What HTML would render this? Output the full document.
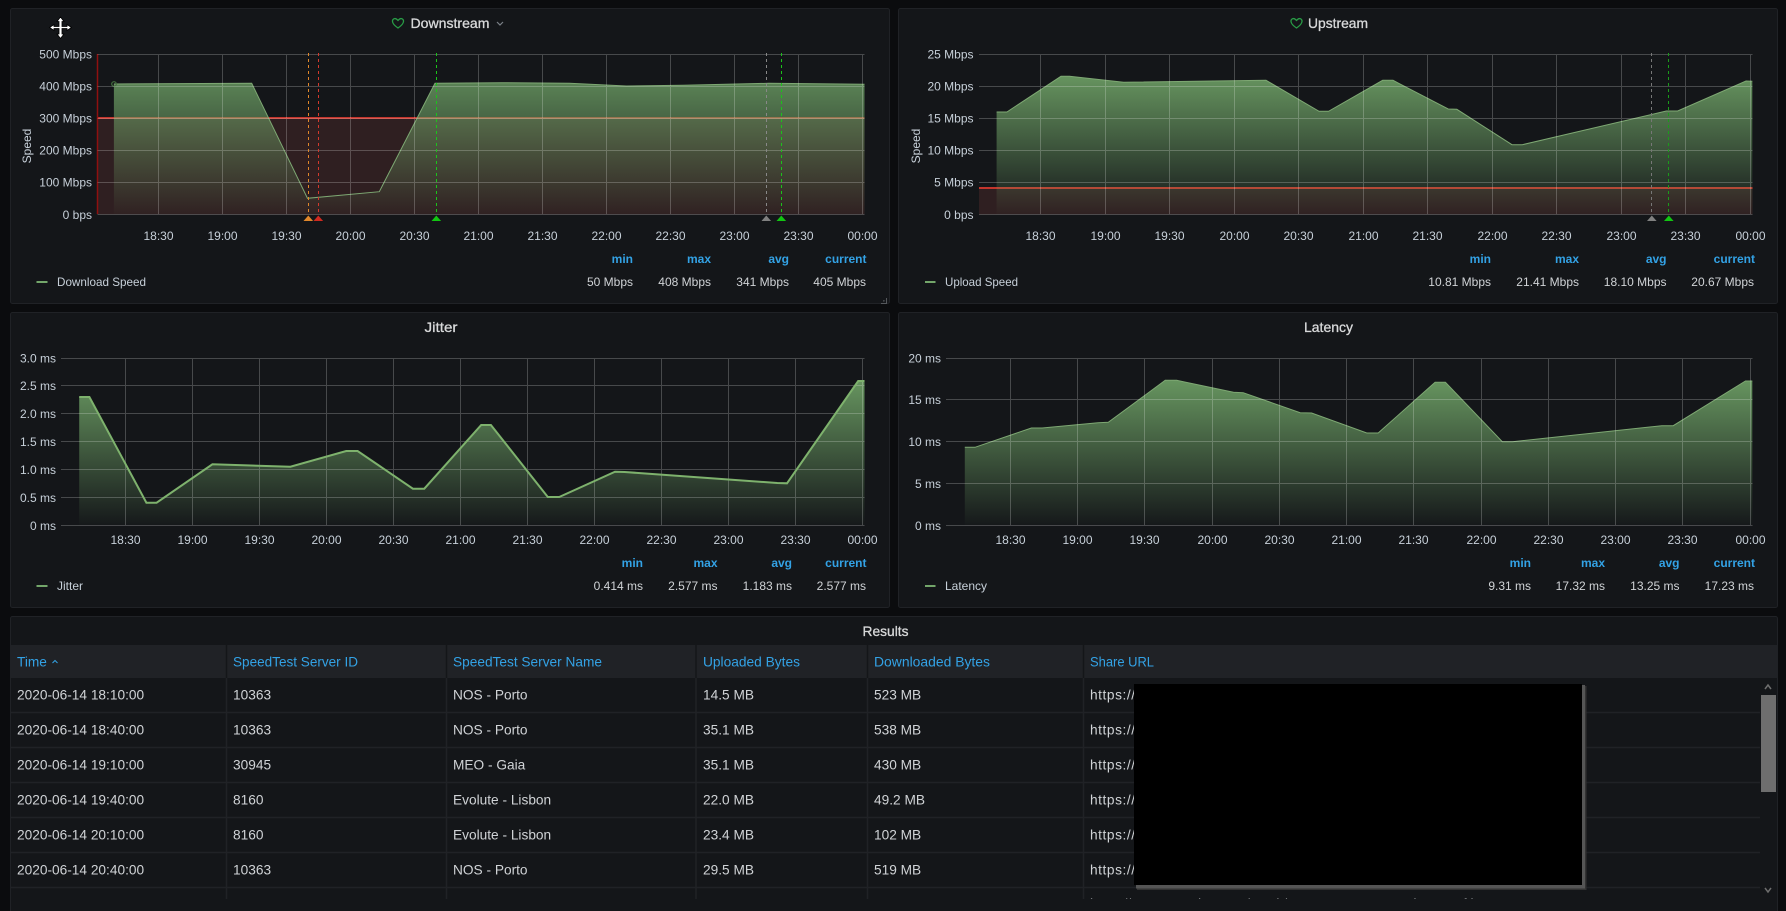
<!DOCTYPE html>
<html><head><meta charset="utf-8"><title>Speedtest</title>
<style>
html,body{margin:0;padding:0;background:#0b0c0e;width:1786px;height:911px;overflow:hidden}
svg{display:block;font-family:"Liberation Sans",sans-serif}
.p{fill:#141619;stroke:#202226;stroke-width:1}
text{fill:#c7d0d9;font-size:12px}
.t{font-size:14px;fill:#d8d9da;text-anchor:middle;stroke:#d8d9da;stroke-width:.3}
.a{text-anchor:end}
.m{text-anchor:middle}
.h{fill:#33a2e5;font-weight:bold;text-anchor:end}
.v{fill:#d0d3d6;text-anchor:end}
.g{stroke:rgba(255,255,255,.22);stroke-width:1;fill:none}
.s{stroke:#7ea873;stroke-width:1;fill:none}
.td{font-size:13.7px;fill:#d0d3d6}
.th{font-size:13.7px;fill:#33a2e5}
.rb{stroke:#202226;stroke-width:1.5;fill:none}
</style></head><body>
<svg width="1786" height="911" viewBox="0 0 1786 911" xmlns="http://www.w3.org/2000/svg">
<defs>
<linearGradient id="g1" gradientUnits="userSpaceOnUse" x1="0" y1="54" x2="0" y2="214"><stop offset="0" stop-color="#73a86a" stop-opacity=".9"/><stop offset="1" stop-color="#73a86a" stop-opacity=".02"/></linearGradient>
<linearGradient id="g2" gradientUnits="userSpaceOnUse" x1="0" y1="70" x2="0" y2="214"><stop offset="0" stop-color="#73a86a" stop-opacity=".9"/><stop offset="1" stop-color="#73a86a" stop-opacity=".02"/></linearGradient>
<linearGradient id="g3" gradientUnits="userSpaceOnUse" x1="0" y1="375" x2="0" y2="525"><stop offset="0" stop-color="#73a86a" stop-opacity=".9"/><stop offset="1" stop-color="#73a86a" stop-opacity=".02"/></linearGradient>
<clipPath id="tc"><rect x="10" y="678" width="1768" height="221"/></clipPath>
</defs>

<!-- Panel 1 -->
<rect class="p" x="10.5" y="8.5" width="879" height="295" rx="2"/>
<path d="M397 19.5c-2-2-4.800-.5-4.500 2 .2 2.500 3 4.800 5.500 6.500 2.500-1.700 5.300-4 5.500-6.500.3-2.500-2.500-4-4.500-2l-1 1z" fill="none" stroke="#299c46" stroke-width="1.300"/>
<text class="t" x="450" y="28" textLength="79" lengthAdjust="spacingAndGlyphs">Downstream</text>
<path d="M497 22l3 3 3-3" fill="none" stroke="#7b8087" stroke-width="1.200"/>
<rect x="98" y="118" width="766.500" height="96.300" fill="rgba(200,90,80,.15)"/>
<line x1="98" y1="118" x2="864.500" y2="118" stroke="#c4352c" stroke-width="2"/>
<line x1="97.500" y1="54" x2="97.500" y2="214" stroke="#8f1010" stroke-width="1.500"/>
<polygon fill="url(#g1)" points="113.900,214.300 113.900,84 251.700,83.300 307.500,198.300 379.300,191.700 435,83.300 501,82.700 569.500,83.300 626.400,86 683.400,85.300 768.800,83.300 864.500,84.300 864.500,214.300"/>
<polyline class="s" points="113.900,84 251.700,83.300 307.500,198.300 379.300,191.700 435,83.300 501,82.700 569.500,83.300 626.400,86 683.400,85.300 768.800,83.300 864.500,84.300"/>
<circle cx="114" cy="84" r="2.300" fill="none" stroke="#44703f" stroke-width="1.200"/>
<path class="g" d="M97.500 54.500H864.500M97.500 86.500H864.500M97.500 118.500H864.500M97.500 150.500H864.500M97.500 182.500H864.500M97.500 214.500H864.500M158.500 54V214M222.500 54V214M286.500 54V214M350.500 54V214M414.500 54V214M478.500 54V214M542.500 54V214M606.500 54V214M670.500 54V214M734.500 54V214M798.500 54V214M862.500 54V214"/>
<g stroke-width="1" stroke-dasharray="3 3" fill="none">
<line x1="308.500" y1="53" x2="308.500" y2="215" stroke="#e0872b"/>
<line x1="318.500" y1="53" x2="318.500" y2="215" stroke="#d23a2c"/>
<line x1="436.500" y1="53" x2="436.500" y2="215" stroke="#1bc41b"/>
<line x1="766.500" y1="53" x2="766.500" y2="215" stroke="#888"/>
<line x1="781.500" y1="53" x2="781.500" y2="215" stroke="#1bc41b"/>
</g>
<path d="M303.500 221l4.800-5.500 4.800 5.500z" fill="#e0872b"/>
<path d="M313.500 221l4.800-5.500 4.800 5.500z" fill="#d02a20"/>
<path d="M431.500 221l4.800-5.500 4.800 5.500z" fill="#12c512"/>
<path d="M761.500 221l4.800-5.500 4.800 5.500z" fill="#808080"/>
<path d="M776.500 221l4.800-5.500 4.800 5.500z" fill="#12c512"/>
<g class="a"><text x="92" y="58.500">500 Mbps</text><text x="92" y="90.500">400 Mbps</text><text x="92" y="122.500">300 Mbps</text><text x="92" y="154.500">200 Mbps</text><text x="92" y="186.500">100 Mbps</text><text x="92" y="219">0 bps</text></g>
<text transform="translate(31,146) rotate(-90)" class="m">Speed</text>
<g class="m"><text x="158.500" y="240">18:30</text><text x="222.500" y="240">19:00</text><text x="286.500" y="240">19:30</text><text x="350.500" y="240">20:00</text><text x="414.500" y="240">20:30</text><text x="478.500" y="240">21:00</text><text x="542.500" y="240">21:30</text><text x="606.500" y="240">22:00</text><text x="670.500" y="240">22:30</text><text x="734.500" y="240">23:00</text><text x="798.500" y="240">23:30</text><text x="862.500" y="240">00:00</text></g>
<text class="h" x="633" y="263">min</text><text class="h" x="711" y="263">max</text><text class="h" x="789" y="263">avg</text><text class="h" x="866.500" y="263">current</text>
<rect x="36.500" y="281" width="11" height="2" fill="#73a66a"/>
<text x="57" y="286" textLength="89" lengthAdjust="spacingAndGlyphs">Download Speed</text>
<text class="v" x="633" y="286">50 Mbps</text><text class="v" x="711" y="286">408 Mbps</text><text class="v" x="789" y="286">341 Mbps</text><text class="v" x="866" y="286">405 Mbps</text>
<path d="M884 300v1h-1M886.500 298v5.500H881" fill="none" stroke="#55585c" stroke-width="1"/>

<!-- Panel 2 -->
<rect class="p" x="898.500" y="8.500" width="879" height="295" rx="2"/>
<path d="M1295.500 19.500c-2-2-4.800-.5-4.500 2 .2 2.500 3 4.800 5.500 6.500 2.500-1.700 5.300-4 5.500-6.500.3-2.500-2.500-4-4.500-2l-1 1z" fill="none" stroke="#299c46" stroke-width="1.300"/>
<text class="t" x="1338" y="28" textLength="60" lengthAdjust="spacingAndGlyphs">Upstream</text>
<rect x="979" y="188" width="773.500" height="26.300" fill="rgba(200,90,80,.15)"/>
<line x1="979" y1="188" x2="1752.500" y2="188" stroke="#c4352c" stroke-width="2"/>
<polygon fill="url(#g2)" points="996.600,214.300 996.600,112 1006.900,112 1061,76.300 1069.500,76.300 1123.600,82.300 1266,80.300 1319,111.300 1328.600,111.300 1382.700,80.300 1393,80.300 1448.200,109 1456.800,109.300 1512,144.700 1522.300,144.700 1666.300,111 1677.700,111 1746,81 1752.300,81.300 1752.300,214.300"/>
<polyline class="s" points="996.600,112 1006.900,112 1061,76.300 1069.500,76.300 1123.600,82.300 1266,80.300 1319,111.300 1328.600,111.300 1382.700,80.300 1393,80.300 1448.200,109 1456.800,109.300 1512,144.700 1522.300,144.700 1666.300,111 1677.700,111 1746,81 1752.300,81.300"/>
<path class="g" d="M979 54.500H1752.500M979 86.500H1752.500M979 118.500H1752.500M979 150.500H1752.500M979 182.500H1752.500M979 214.500H1752.500M1040.500 54V214M1105.500 54V214M1169.500 54V214M1234.500 54V214M1298.500 54V214M1363.500 54V214M1427.500 54V214M1492.500 54V214M1556.500 54V214M1621.500 54V214M1685.500 54V214M1750.500 54V214"/>
<g stroke-width="1" stroke-dasharray="3 3" fill="none">
<line x1="1651.500" y1="53" x2="1651.500" y2="215" stroke="#777"/>
<line x1="1668.500" y1="53" x2="1668.500" y2="215" stroke="#1a9c1a"/>
</g>
<path d="M1647 221l4.800-5.500 4.800 5.500z" fill="#808080"/>
<path d="M1664 221l4.800-5.500 4.800 5.500z" fill="#12c512"/>
<g class="a"><text x="973.500" y="58.500">25 Mbps</text><text x="973.500" y="90.500">20 Mbps</text><text x="973.500" y="122.500">15 Mbps</text><text x="973.500" y="154.500">10 Mbps</text><text x="973.500" y="186.500">5 Mbps</text><text x="973.500" y="219">0 bps</text></g>
<text transform="translate(920,146) rotate(-90)" class="m">Speed</text>
<g class="m"><text x="1040.500" y="240">18:30</text><text x="1105.500" y="240">19:00</text><text x="1169.500" y="240">19:30</text><text x="1234.500" y="240">20:00</text><text x="1298.500" y="240">20:30</text><text x="1363.500" y="240">21:00</text><text x="1427.500" y="240">21:30</text><text x="1492.500" y="240">22:00</text><text x="1556.500" y="240">22:30</text><text x="1621.500" y="240">23:00</text><text x="1685.500" y="240">23:30</text><text x="1750.500" y="240">00:00</text></g>
<text class="h" x="1491" y="263">min</text><text class="h" x="1579" y="263">max</text><text class="h" x="1666.500" y="263">avg</text><text class="h" x="1755" y="263">current</text>
<rect x="925" y="281" width="10.500" height="2" fill="#73a66a"/>
<text x="945" y="286" textLength="73" lengthAdjust="spacingAndGlyphs">Upload Speed</text>
<text class="v" x="1491" y="286">10.81 Mbps</text><text class="v" x="1579" y="286">21.41 Mbps</text><text class="v" x="1666.500" y="286">18.10 Mbps</text><text class="v" x="1754" y="286">20.67 Mbps</text>

<!-- Panel 3 -->
<rect class="p" x="10.500" y="312.500" width="879" height="295" rx="2"/>
<text class="t" x="441" y="332" textLength="33" lengthAdjust="spacingAndGlyphs">Jitter</text>
<polygon fill="url(#g3)" points="79.200,525.300 79.200,397 89.400,397 146.400,502.700 156.600,502.700 212.400,464.300 290.400,466.700 346.200,451 357.600,451 412.900,488.700 424.300,488.700 481.200,425 490.900,425 547.800,497 559.200,497 615,471.700 624.700,472 777.300,483 787,483.300 858.200,381 864.500,381 864.500,525.300"/>
<path class="g" d="M61 358.500H864.500M61 385.500H864.500M61 413.500H864.500M61 441.500H864.500M61 469.500H864.500M61 497.500H864.500M61 525.500H864.500M125.500 358V525M192.500 358V525M259.500 358V525M326.500 358V525M393.500 358V525M460.500 358V525M527.500 358V525M594.500 358V525M661.500 358V525M728.500 358V525M795.500 358V525M862.500 358V525"/>
<polyline fill="none" stroke="#7eb26d" stroke-width="2" points="79.200,397 89.400,397 146.400,502.700 156.600,502.700 212.400,464.300 290.400,466.700 346.200,451 357.600,451 412.900,488.700 424.300,488.700 481.200,425 490.900,425 547.800,497 559.200,497 615,471.700 624.700,472 777.300,483 787,483.300 858.200,381 864.500,381"/>
<g class="a"><text x="56" y="362.500">3.0 ms</text><text x="56" y="390">2.5 ms</text><text x="56" y="418">2.0 ms</text><text x="56" y="446">1.5 ms</text><text x="56" y="474">1.0 ms</text><text x="56" y="502">0.5 ms</text><text x="56" y="530">0 ms</text></g>
<g class="m"><text x="125.500" y="544">18:30</text><text x="192.500" y="544">19:00</text><text x="259.500" y="544">19:30</text><text x="326.500" y="544">20:00</text><text x="393.500" y="544">20:30</text><text x="460.500" y="544">21:00</text><text x="527.500" y="544">21:30</text><text x="594.500" y="544">22:00</text><text x="661.500" y="544">22:30</text><text x="728.500" y="544">23:00</text><text x="795.500" y="544">23:30</text><text x="862.500" y="544">00:00</text></g>
<text class="h" x="643" y="567">min</text><text class="h" x="717.500" y="567">max</text><text class="h" x="792" y="567">avg</text><text class="h" x="866.500" y="567">current</text>
<rect x="36.500" y="585" width="11" height="2" fill="#73a66a"/>
<text x="57" y="590">Jitter</text>
<text class="v" x="643" y="590">0.414 ms</text><text class="v" x="717.500" y="590">2.577 ms</text><text class="v" x="792" y="590">1.183 ms</text><text class="v" x="866" y="590">2.577 ms</text>

<!-- Panel 4 -->
<rect class="p" x="898.500" y="312.500" width="879" height="295" rx="2"/>
<text class="t" x="1328.500" y="332" textLength="49" lengthAdjust="spacingAndGlyphs">Latency</text>
<polygon fill="url(#g3)" points="964.800,525.300 964.800,447.300 975,447.300 1031.400,428 1042.200,428 1098,422.700 1108.300,422.300 1165.200,380.300 1176.600,380.300 1233.500,392.300 1243.200,392.700 1300.200,412.700 1311.600,413 1366.800,433 1378.200,433 1435.100,382.300 1445.400,382.300 1502.300,441.700 1512.600,441.700 1661.800,425.700 1673.200,425.700 1745.500,381 1752.300,381 1752.300,525.300"/>
<polyline class="s" points="964.800,447.300 975,447.300 1031.400,428 1042.200,428 1098,422.700 1108.300,422.300 1165.200,380.300 1176.600,380.300 1233.500,392.300 1243.200,392.700 1300.200,412.700 1311.600,413 1366.800,433 1378.200,433 1435.100,382.300 1445.400,382.300 1502.300,441.700 1512.600,441.700 1661.800,425.700 1673.200,425.700 1745.500,381 1752.300,381"/>
<path class="g" d="M946 358.500H1752.500M946 399.500H1752.500M946 441.500H1752.500M946 483.500H1752.500M946 525.500H1752.500M1010.500 358V525M1077.500 358V525M1144.500 358V525M1212.500 358V525M1279.500 358V525M1346.500 358V525M1413.500 358V525M1481.500 358V525M1548.500 358V525M1615.500 358V525M1682.500 358V525M1750.500 358V525"/>
<g class="a"><text x="941" y="362.500">20 ms</text><text x="941" y="404">15 ms</text><text x="941" y="446">10 ms</text><text x="941" y="488">5 ms</text><text x="941" y="530">0 ms</text></g>
<g class="m"><text x="1010.500" y="544">18:30</text><text x="1077.500" y="544">19:00</text><text x="1144.500" y="544">19:30</text><text x="1212.500" y="544">20:00</text><text x="1279.500" y="544">20:30</text><text x="1346.500" y="544">21:00</text><text x="1413.500" y="544">21:30</text><text x="1481.500" y="544">22:00</text><text x="1548.500" y="544">22:30</text><text x="1615.500" y="544">23:00</text><text x="1682.500" y="544">23:30</text><text x="1750.500" y="544">00:00</text></g>
<text class="h" x="1531" y="567">min</text><text class="h" x="1605" y="567">max</text><text class="h" x="1679.500" y="567">avg</text><text class="h" x="1755" y="567">current</text>
<rect x="925" y="585" width="10.500" height="2" fill="#73a66a"/>
<text x="945" y="590">Latency</text>
<text class="v" x="1531" y="590">9.31 ms</text><text class="v" x="1605" y="590">17.32 ms</text><text class="v" x="1679.500" y="590">13.25 ms</text><text class="v" x="1754" y="590">17.23 ms</text>

<!-- Table panel -->
<rect class="p" x="10.500" y="616.500" width="1767" height="300" rx="2"/>
<text class="t" x="885.500" y="636" textLength="46" lengthAdjust="spacingAndGlyphs">Results</text>
<rect x="11" y="645" width="1766" height="33" fill="#202226"/>
<path d="M226.500 645V678M446.500 645V678M696 645V678M867.500 645V678M1083.500 645V678" stroke="#141619" stroke-width="1.500" fill="none"/>
<text class="th" x="17" y="666.500">Time</text><path d="M52.500 663l2.500-2.500 2.500 2.500" fill="none" stroke="#33a2e5" stroke-width="1"/>
<text class="th" x="233" y="666.500" textLength="125" lengthAdjust="spacingAndGlyphs">SpeedTest Server ID</text>
<text class="th" x="453" y="666.500" textLength="149" lengthAdjust="spacingAndGlyphs">SpeedTest Server Name</text>
<text class="th" x="703" y="666.500" textLength="97" lengthAdjust="spacingAndGlyphs">Uploaded Bytes</text>
<text class="th" x="874" y="666.500" textLength="116" lengthAdjust="spacingAndGlyphs">Downloaded Bytes</text>
<text class="th" x="1090" y="666.500" textLength="64" lengthAdjust="spacingAndGlyphs">Share URL</text>
<g clip-path="url(#tc)">
<path class="rb" d="M226.500 678V899M446.500 678V899M696 678V899M867.500 678V899M1083.500 678V899M11 712.500H1760M11 747.500H1760M11 782.500H1760M11 817.500H1760M11 852.500H1760M11 887.500H1760"/>
<text class="td" x="17" y="699.500">2020-06-14 18:10:00</text><text class="td" x="233" y="699.500">10363</text><text class="td" x="453" y="699.500">NOS - Porto</text><text class="td" x="703" y="699.500">14.5 MB</text><text class="td" x="874" y="699.500">523 MB</text><text class="td" x="1090" y="699.500" textLength="45">https://</text>
<text class="td" x="17" y="734.500">2020-06-14 18:40:00</text><text class="td" x="233" y="734.500">10363</text><text class="td" x="453" y="734.500">NOS - Porto</text><text class="td" x="703" y="734.500">35.1 MB</text><text class="td" x="874" y="734.500">538 MB</text><text class="td" x="1090" y="734.500" textLength="45">https://</text>
<text class="td" x="17" y="769.500">2020-06-14 19:10:00</text><text class="td" x="233" y="769.500">30945</text><text class="td" x="453" y="769.500">MEO - Gaia</text><text class="td" x="703" y="769.500">35.1 MB</text><text class="td" x="874" y="769.500">430 MB</text><text class="td" x="1090" y="769.500" textLength="45">https://</text>
<text class="td" x="17" y="804.500">2020-06-14 19:40:00</text><text class="td" x="233" y="804.500">8160</text><text class="td" x="453" y="804.500">Evolute - Lisbon</text><text class="td" x="703" y="804.500">22.0 MB</text><text class="td" x="874" y="804.500">49.2 MB</text><text class="td" x="1090" y="804.500" textLength="45">https://</text>
<text class="td" x="17" y="839.500">2020-06-14 20:10:00</text><text class="td" x="233" y="839.500">8160</text><text class="td" x="453" y="839.500">Evolute - Lisbon</text><text class="td" x="703" y="839.500">23.4 MB</text><text class="td" x="874" y="839.500">102 MB</text><text class="td" x="1090" y="839.500" textLength="45">https://</text>
<text class="td" x="17" y="874.500">2020-06-14 20:40:00</text><text class="td" x="233" y="874.500">10363</text><text class="td" x="453" y="874.500">NOS - Porto</text><text class="td" x="703" y="874.500">29.5 MB</text><text class="td" x="874" y="874.500">519 MB</text><text class="td" x="1090" y="874.500" textLength="45">https://</text>
<text class="td" x="1090" y="908.500">https://www.speedtest.net/result/9876543210.png and more of it</text>
</g>
<!-- scrollbar -->
<rect x="1761" y="695" width="15" height="97" fill="#6e6e6e"/>
<path d="M1765 689l3-4 3 4" fill="none" stroke="#6e6e6e" stroke-width="1.500"/>
<path d="M1765 888l3 4 3-4" fill="none" stroke="#6e6e6e" stroke-width="1.500"/>
<!-- redaction -->
<rect x="1137" y="686" width="449.500" height="204" fill="#333"/>
<rect x="1136" y="685" width="449" height="203.500" fill="#555"/>
<rect x="1134" y="684" width="448" height="201" fill="#000"/>
<!-- cursor -->
<path d="M60.500 17l3.500 4.500h-2V26.500h5v-2l4.500 3-4.500 3v-2h-5v5.500h2l-3.500 4.500-3.500-4.500h2v-5.500h-5v2l-4.500-3 4.500-3v2h5V21.500h-2z" fill="#fff" stroke="#000" stroke-width=".8"/>
</svg>
</body></html>
